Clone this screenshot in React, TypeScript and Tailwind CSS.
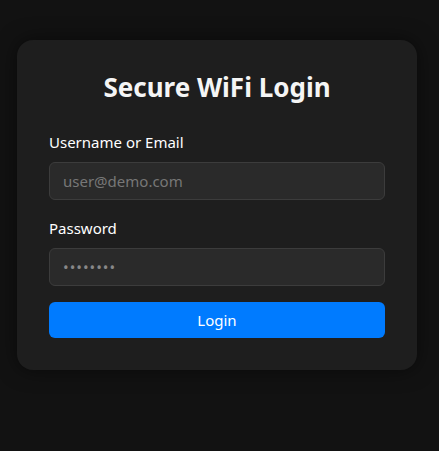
import React from 'react'

const App = () => {
  return (
    <div className="min-h-[451px] bg-[#121212] pt-[40px] pl-[17px]" style={{ fontFamily: '"Noto Sans", sans-serif' }}>
      <div className="w-[400px] rounded-2xl bg-[#1e1e1e] p-8 shadow-[0_0_20px_rgba(0,0,0,0.5)]">
        <h2 className="h-[31px] text-center text-[26px] leading-[31px] font-bold text-[#f5f5f5]">Secure WiFi Login</h2>

        <form className="mt-[28px] flex flex-col" onSubmit={(e) => e.preventDefault()}>
          <label className="mb-[9px] text-[15px] leading-[22px] text-white">Username or Email</label>
          <input
            type="text"
            placeholder="user@demo.com"
            className="h-[38px] rounded-md border border-[#3c3c3c] bg-[#2a2a2a] px-[13px] text-[15px] text-white outline-none placeholder:text-[#777]"
          />

          <label className="mt-[17px] mb-[9px] text-[15px] leading-[22px] text-white">Password</label>
          <input
            type="password"
            defaultValue="password"
            className="h-[38px] rounded-md border border-[#3c3c3c] bg-[#2a2a2a] px-[13px] text-[15px] tracking-[1px] text-[#888] outline-none"
          />

          <button className="mt-[16px] h-[36px] rounded-md bg-[#007bff] text-[15px] text-white">Login</button>
        </form>
      </div>
    </div>
  )
}

export default App
